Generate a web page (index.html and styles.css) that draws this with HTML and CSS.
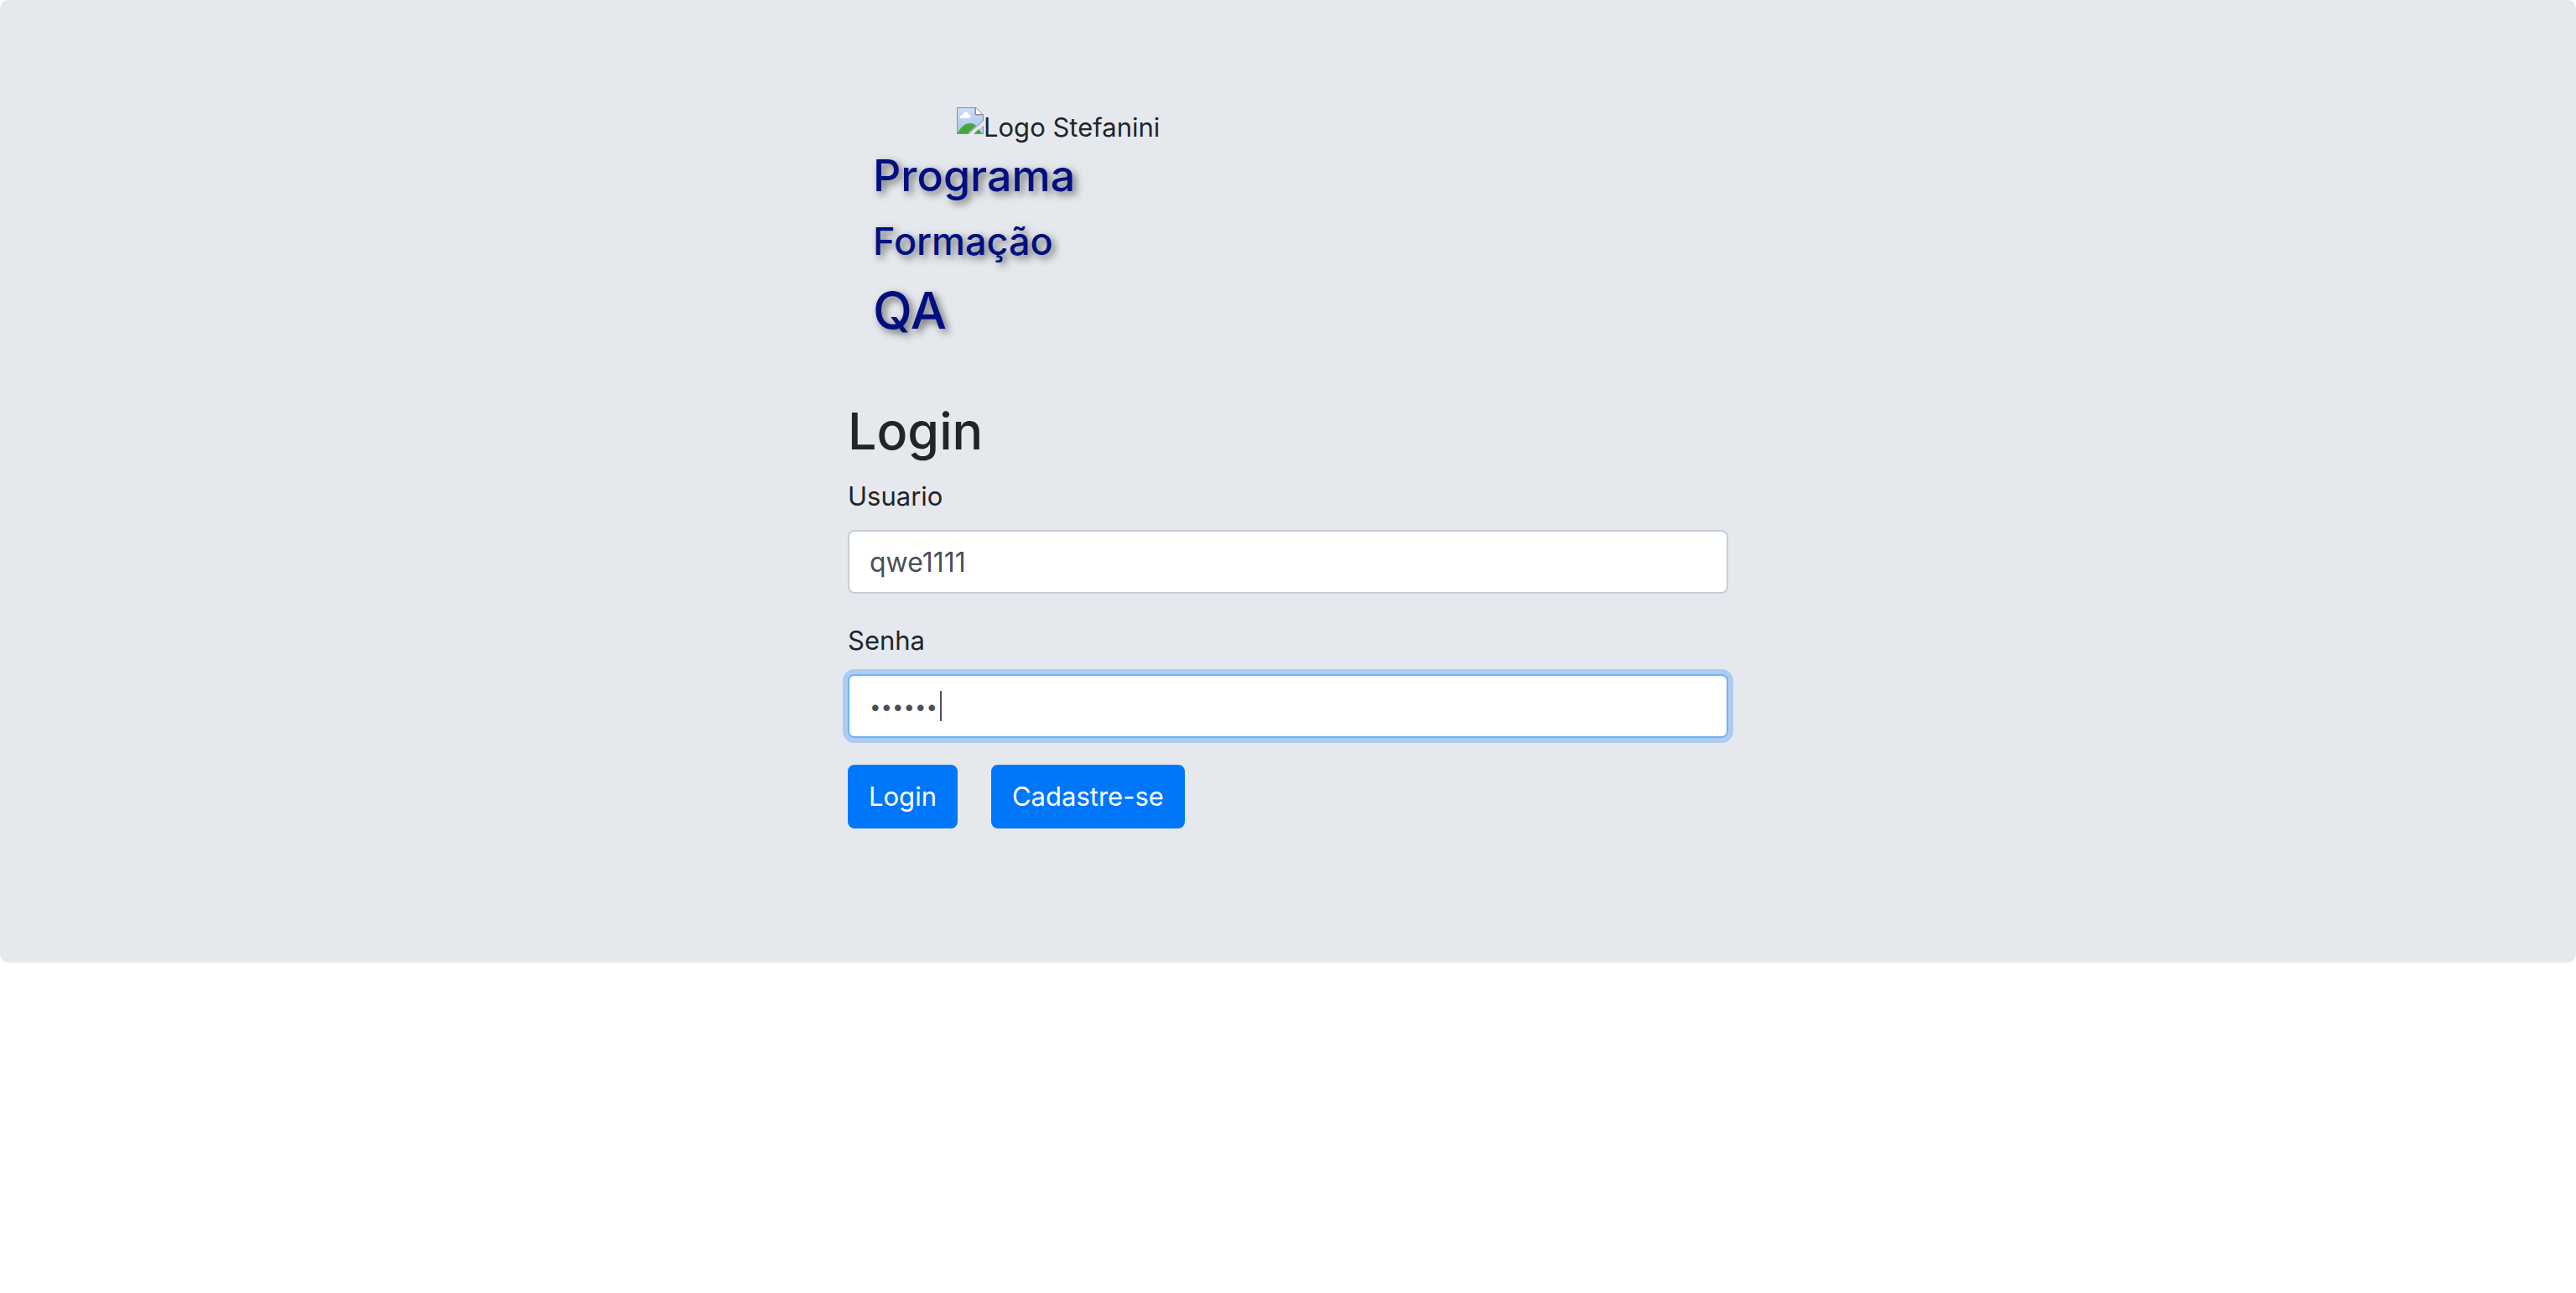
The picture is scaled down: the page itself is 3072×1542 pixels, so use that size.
FILE: index.html
```html
<!DOCTYPE html>
<html lang="pt-BR">
<head>
<meta charset="utf-8">
<meta name="viewport" content="width=device-width, initial-scale=1">
<title>Login</title>
<link rel="stylesheet" href="styles.css">
</head>
<body>
<main class="jumbotron">
  <div class="content">
    <header class="brand">
      <div class="logo">
        <svg class="logo-icon" viewBox="0 0 32 32" aria-hidden="true">
          <defs>
            <linearGradient id="sky" x1="0" y1="0" x2="0" y2="1">
              <stop offset="0" stop-color="#c9defa"/>
              <stop offset="1" stop-color="#a9c3ea"/>
            </linearGradient>
          </defs>
          <path d="M0 0H23L32 9V16L14 32H0Z" fill="#8c9094"/>
          <path d="M1 1H22V9H31V16L14 31H1Z" fill="url(#sky)"/>
          <path d="M32 22V32H20Z" fill="#8c9094"/>
          <path d="M31 23V31H21Z" fill="#b4cdf0"/>
          <path d="M23 1V8H30Z" fill="#fff"/>
          <path d="M22 0V9H32" fill="none" stroke="#8c9094"/>
          <path d="M4 13C3 10 5 9 7 9C7 5 14 4 15 9C17 9 17 12 15 13Z" fill="#fff"/>
          <path d="M1 31C5 23 10 19 16 19C19 19 21 20 23 22L13 31Z" fill="#46a53c"/>
          <path d="M21 31L26 26L30 31Z" fill="#46a53c"/>
        </svg>
        <span>Logo Stefanini</span>
      </div>
      <h3 class="brand-title">Programa</h3>
      <h4 class="brand-title">Formação</h4>
      <h2 class="brand-title">QA</h2>
    </header>
    <form>
      <h2>Login</h2>
      <div class="field">
        <label for="user">Usuario</label>
        <input class="control" id="user" type="text" value="qwe1111">
      </div>
      <div class="field">
        <label for="password">Senha</label>
        <div class="secret">
          <input class="control" id="password" type="password" value="123456" autofocus>
          <span class="caret" aria-hidden="true"></span>
        </div>
      </div>
      <div class="actions">
        <button class="button" type="button">Login</button>
        <button class="button" type="button">Cadastre-se</button>
      </div>
    </form>
  </div>
</main>
</body>
</html>
```
FILE: styles.css
```css
* {
  box-sizing: border-box;
}

body {
  margin: 0;
  background: #fff;
  color: #212529;
  font: 400 31px/48px Inter, "Liberation Sans", sans-serif;
}

.jumbotron {
  padding: 128px 64px 160px;
  border-radius: 10px;
  background: #e5e9ee;
}

.content {
  max-width: 1050px;
  margin: 0 auto;
}

.brand {
  padding: 0 30px;
  margin-bottom: 68px;
}

.logo {
  display: flex;
  align-items: flex-start;
  margin-left: 100px;
}

.logo-icon {
  width: 32px;
  height: 32px;
}

h2, h3, h4 {
  margin: 0 0 16px;
  font-weight: 500;
}

h2 {
  font-size: 61px;
  line-height: 76px;
}

h3 {
  font-size: 52px;
  line-height: 67px;
}

h4 {
  font-size: 45px;
  line-height: 57px;
}

.brand-title {
  color: #000f80;
  text-shadow: 4px 4px 10px #666;
}

.field {
  margin-bottom: 32px;
}

.field label {
  display: block;
  margin-bottom: 16px;
}

.control {
  display: block;
  width: 100%;
  height: 76px;
  padding: 12px 24px;
  border: 2px solid #c5ced4;
  border-radius: 8px;
  outline: 0;
  background: #fff;
  color: #495057;
  font: inherit;
  font-size: 32px;
}

.control[type="password"] {
  font-size: 24px;
  caret-color: transparent;
}

.control:focus {
  border-color: #6cb5fa;
  box-shadow: 0 0 0 6px #aecbf0;
}

.secret {
  position: relative;
}

.caret {
  position: absolute;
  top: 20px;
  left: 110px;
  width: 2px;
  height: 36px;
  background: #495057;
}

.actions {
  display: flex;
  gap: 40px;
}

.button {
  height: 76px;
  padding: 12px 23px;
  border: 2px solid #0077fa;
  border-radius: 8px;
  background: #0077fa;
  color: #fff;
  font: inherit;
}
```
